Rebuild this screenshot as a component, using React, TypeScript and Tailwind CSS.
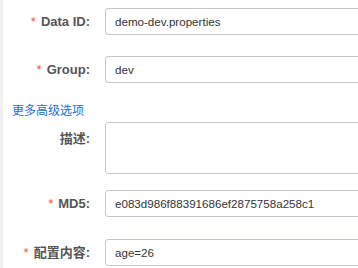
import React from 'react';

const FONT = "font-['Liberation_Sans','Noto_Sans_CJK_SC',sans-serif]";

function Label({ text, required, top }: { text: string; required?: boolean; top?: boolean }) {
  return (
    <div
      className={`w-[90px] shrink-0 pr-[3px] text-right text-[13px] font-bold text-[#555] ${top ? 'self-start pt-[7px]' : ''}`}
    >
      {required && <span className="mr-[5px] font-normal text-[#f5533d]">*</span>}
      {text}
    </div>
  );
}

function Field({
  label,
  value,
  required,
  className,
}: {
  label: string;
  value: string;
  required?: boolean;
  className?: string;
}) {
  return (
    <div className={`flex items-center ${className ?? ''}`}>
      <Label text={label} required={required} />
      <div className="ml-[12px] flex h-[27px] w-[300px] shrink-0 items-center rounded-[3px] border border-[#c4c6cf] px-[9px] text-[11.6px] text-[#333]">
        {value}
      </div>
    </div>
  );
}

export default function App() {
  return (
    <div className={`flex h-[268px] w-[358px] overflow-hidden bg-white ${FONT}`}>
      <div className="w-[3px] shrink-0 bg-[#eef0f4]" />
      <div className="flex min-w-0 flex-1 flex-col">
        <Field className="mt-[8px]" label="Data ID:" value="demo-dev.properties" required />
        <Field className="mt-[21px]" label="Group:" value="dev" required />
        <a className="mt-[20px] ml-[9px] h-[16px] text-[12px] leading-[16px] text-[#1a6ed4]">更多高级选项</a>
        <div className="mt-[3px] flex">
          <Label text="描述:" top />
          <div className="ml-[12px] h-[52px] w-[300px] shrink-0 rounded-[3px] border border-[#c4c6cf]" />
        </div>
        <Field className="mt-[16px]" label="MD5:" value="e083d986f88391686ef2875758a258c1" required />
        <Field className="mt-[22px]" label="配置内容:" value="age=26" required />
      </div>
    </div>
  );
}
